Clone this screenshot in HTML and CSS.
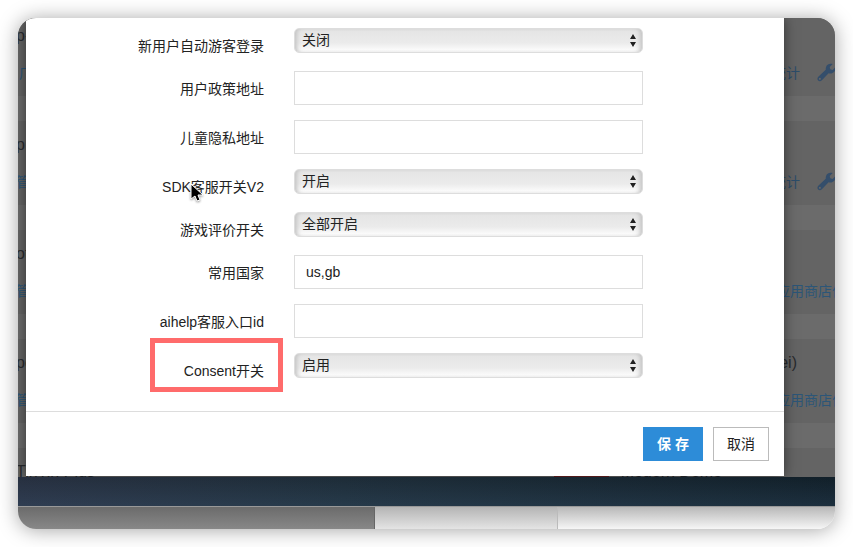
FILE: index.html
```html
<!doctype html>
<html lang="zh-CN">
    <head>
        <meta charset="UTF-8" />
        <meta name="viewport" content="width=device-width, initial-scale=1.0" />
        <title>Consent开关</title>
        <link rel="stylesheet" href="styles.css">
    </head>
    <body>
        <svg class="symbols" aria-hidden="true">
            <symbol id="arrows" viewBox="0 0 8 13">
                <path d="M4 0L7 5H1zM4 13L1 8h6z" />
            </symbol>
            <symbol id="wrench" viewBox="0 0 20 20">
                <path d="M18.700 3.900 L15.600 6.900 L13.300 6.300 L12.700 4 L15.700 1.100 C12.800 0 9.500 1.400 8.900 4.400 C8.600 5.600 8.800 6.200 8.700 6.700 L1.300 13.700 C.2 14.900.2 16.400 1.100 17.500 C2.200 18.500 3.700 18.500 4.900 17.300 L11.600 10.300 C14.800 11.500 19.400 8.500 18.700 3.900zM3.900 15.700a1 1 0 1 1-1.600-.6a1 1 0 0 1 1.600.6z" />
            </symbol>
        </svg>

        <div class="window">
            <div class="page">
                <!-- app list under the dialog -->
                <div class="app-list">
                    <div class="app">
                        <div class="app-title"><span>p-</span></div>
                        <div class="app-links">
                            <a href="#" class="indent">广</a>
                            <span class="tools">
                                <a href="#">统计</a>
                                <svg class="wrench"><use href="#wrench" /></svg>
                            </span>
                        </div>
                    </div>
                    <div class="app">
                        <div class="app-title"><span>p</span></div>
                        <div class="app-links">
                            <a href="#">管</a>
                            <span class="tools">
                                <a href="#">统计</a>
                                <svg class="wrench"><use href="#wrench" /></svg>
                            </span>
                        </div>
                    </div>
                    <div class="app">
                        <div class="app-title"><span>ot</span></div>
                        <div class="app-links">
                            <a href="#">管</a>
                            <a href="#">应用商店信</a>
                        </div>
                    </div>
                    <div class="app">
                        <div class="app-title"><span>pe</span><span>ei)</span></div>
                        <div class="app-links">
                            <a href="#">管</a>
                            <a href="#">应用商店信</a>
                        </div>
                    </div>
                    <div class="app">
                        <div class="app-title last">
                            <span>TinTin Plus</span>
                            <span class="tag"></span>
                            <span>Modern Demo</span>
                        </div>
                    </div>
                </div>

                <form class="modal" onsubmit="return false">
                    <div class="modal-body">
                        <div class="form-group">
                            <label for="guestLogin">新用户自动游客登录</label>
                            <div class="select">
                                <select id="guestLogin">
                                    <option>关闭</option>
                                </select>
                                <svg><use href="#arrows" /></svg>
                            </div>
                        </div>
                        <div class="form-group">
                            <label for="policyUrl">用户政策地址</label>
                            <input type="text" id="policyUrl" />
                        </div>
                        <div class="form-group">
                            <label for="childUrl">儿童隐私地址</label>
                            <input type="text" id="childUrl" />
                        </div>
                        <div class="form-group">
                            <label for="sdkService">SDK客服开关V2
                                <svg class="cursor" viewBox="0 0 14 20">
                                    <path d="M1 1v15l4-3 2 5 3-1-2-5h5z" />
                                </svg>
                            </label>
                            <div class="select">
                                <select id="sdkService">
                                    <option>开启</option>
                                </select>
                                <svg><use href="#arrows" /></svg>
                            </div>
                        </div>
                        <div class="form-group">
                            <label for="rating">游戏评价开关</label>
                            <div class="select">
                                <select id="rating">
                                    <option>全部开启</option>
                                </select>
                                <svg><use href="#arrows" /></svg>
                            </div>
                        </div>
                        <div class="form-group">
                            <label for="countries">常用国家</label>
                            <input type="text" id="countries" value="us,gb" />
                        </div>
                        <div class="form-group">
                            <label for="aihelpId">aihelp客服入口id</label>
                            <input type="text" id="aihelpId" />
                        </div>
                        <div class="form-group">
                            <label for="consent" class="marked">Consent开关</label>
                            <div class="select">
                                <select id="consent">
                                    <option>启用</option>
                                </select>
                                <svg><use href="#arrows" /></svg>
                            </div>
                        </div>
                    </div>
                    <div class="modal-footer">
                        <button type="submit" class="btn-save">保 存</button>
                        <button type="button" class="btn-cancel">取消</button>
                    </div>
                </form>
            </div>

            <div class="wallpaper"></div>
            <div class="panels">
                <div class="panel-dark"></div>
                <div class="panel-mid"></div>
                <div class="panel-light"></div>
            </div>
        </div>
    </body>
</html>
```

FILE: styles.css
```css
*,
*::after {
    box-sizing: border-box;
}
body {
    margin: 0;
    padding: 18px;
    background: #fff;
    color: #222;
    font-family: "Liberation Sans", "Noto Sans CJK SC", sans-serif;
    font-size: 14px;
    line-height: 20px;
}
.symbols {
    display: none;
}
.window {
    overflow: hidden;
    border-radius: 18px;
    box-shadow: 0 1px 20px rgba(0, 0, 0, 0.36);
}
.page {
    position: relative;
    overflow: hidden;
    padding: 0 51px 1px 8px;
    background: #6b6b6b;
}

/* App list */
.app-list {
    position: absolute;
    inset: -6px -11px auto -2px;
}
.app {
    height: 84px;
    margin-bottom: 25px;
    padding-top: 13px;
    background: #646464;
}
.app-title,
.app-links {
    display: flex;
    justify-content: space-between;
}
.app-title {
    height: 22px;
    margin-bottom: 16px;
    padding-right: 49px;
    color: #292b2e;
    font-size: 16px;
    line-height: 22px;
}
.app-title.last {
    padding-right: 124px;
}
.tag {
    width: 55px;
    height: 18px;
    margin-left: auto;
    margin-right: 12px;
    background: #6b2222;
}
.app-links a {
    color: #2c5678;
    text-decoration: none;
}
.app-links .indent {
    padding-left: 3px;
}
.tools {
    display: flex;
    padding-right: 9px;
}
.app-links .tools a {
    color: #2c4d6a;
}
.wrench {
    width: 20px;
    height: 20px;
    margin-left: 17px;
    fill: #344e6b;
}

/* Dialog */
.modal {
    position: relative;
    background: #fff;
    box-shadow: 0 0 12px rgba(0, 0, 0, 0.5);
}
.modal-body {
    padding: 10px 0 15px;
}
.form-group {
    display: grid;
    grid-template-columns: 238fr 349fr 111fr;
    column-gap: 30px;
    align-items: start;
    margin-bottom: 15px;
}
label {
    position: relative;
    padding-top: 8px;
    text-align: right;
}
input,
select {
    display: block;
    width: 100%;
    border: 1px solid #ddd;
    background: #fff;
    color: #222;
    font: inherit;
}
input {
    height: 34px;
    padding: 6px 11px;
}
.select {
    position: relative;
}
select {
    height: 25px;
    padding: 0 7px 2px;
    appearance: none;
    border-radius: 5px;
    background: linear-gradient(#e4e4e4, #ebebeb 60%, #fff);
    box-shadow: inset 4px 0 4px -2px #c4c4c4, inset -4px 0 4px -2px #c4c4c4;
}
.select svg {
    position: absolute;
    top: 6px;
    right: 6px;
    width: 8px;
    height: 13px;
    fill: #222;
    pointer-events: none;
}
.marked::after {
    content: "";
    position: absolute;
    top: -15px;
    right: -19px;
    width: 133px;
    height: 54px;
    border: 5px solid #ff6b6b;
}
.cursor {
    position: absolute;
    top: 14px;
    right: 60px;
    width: 14px;
    height: 20px;
    fill: #000;
    stroke: #fff;
    filter: drop-shadow(0 1px 1px rgba(0, 0, 0, 0.4));
}
.modal-footer {
    display: flex;
    justify-content: flex-end;
    gap: 10px;
    padding: 15px;
    border-top: 1px solid #ddd;
}
button {
    height: 34px;
    padding: 0;
    border: 1px solid #bbb;
    background: #fff;
    color: #222;
    font: inherit;
    cursor: pointer;
}
.btn-save {
    width: 60px;
    border-color: #2d8cd8;
    background: #2d8cd8;
    color: #fff;
    font-weight: bold;
}
.btn-cancel {
    width: 56px;
}

/* Desktop below the browser */
.wallpaper {
    height: 29px;
    background:
        linear-gradient(rgba(0, 0, 0, 0.12), rgba(60, 90, 120, 0.2)),
        linear-gradient(90deg, #2c3648, #21323f 40%, #14242f);
}
.panels {
    display: grid;
    grid-template-columns: 357fr 182fr 278fr;
    height: 23px;
    border-top: 1px solid #999;
}
.panel-dark {
    background: linear-gradient(#6b6b6b, #888);
    border-right: 1px solid #666;
}
.panel-mid {
    background: linear-gradient(#b4b4b4, #e4e4e4);
}
.panel-light {
    border-left: 1px solid #bbb;
    background: linear-gradient(#b8b8b8, #f6f6f6);
}
```
